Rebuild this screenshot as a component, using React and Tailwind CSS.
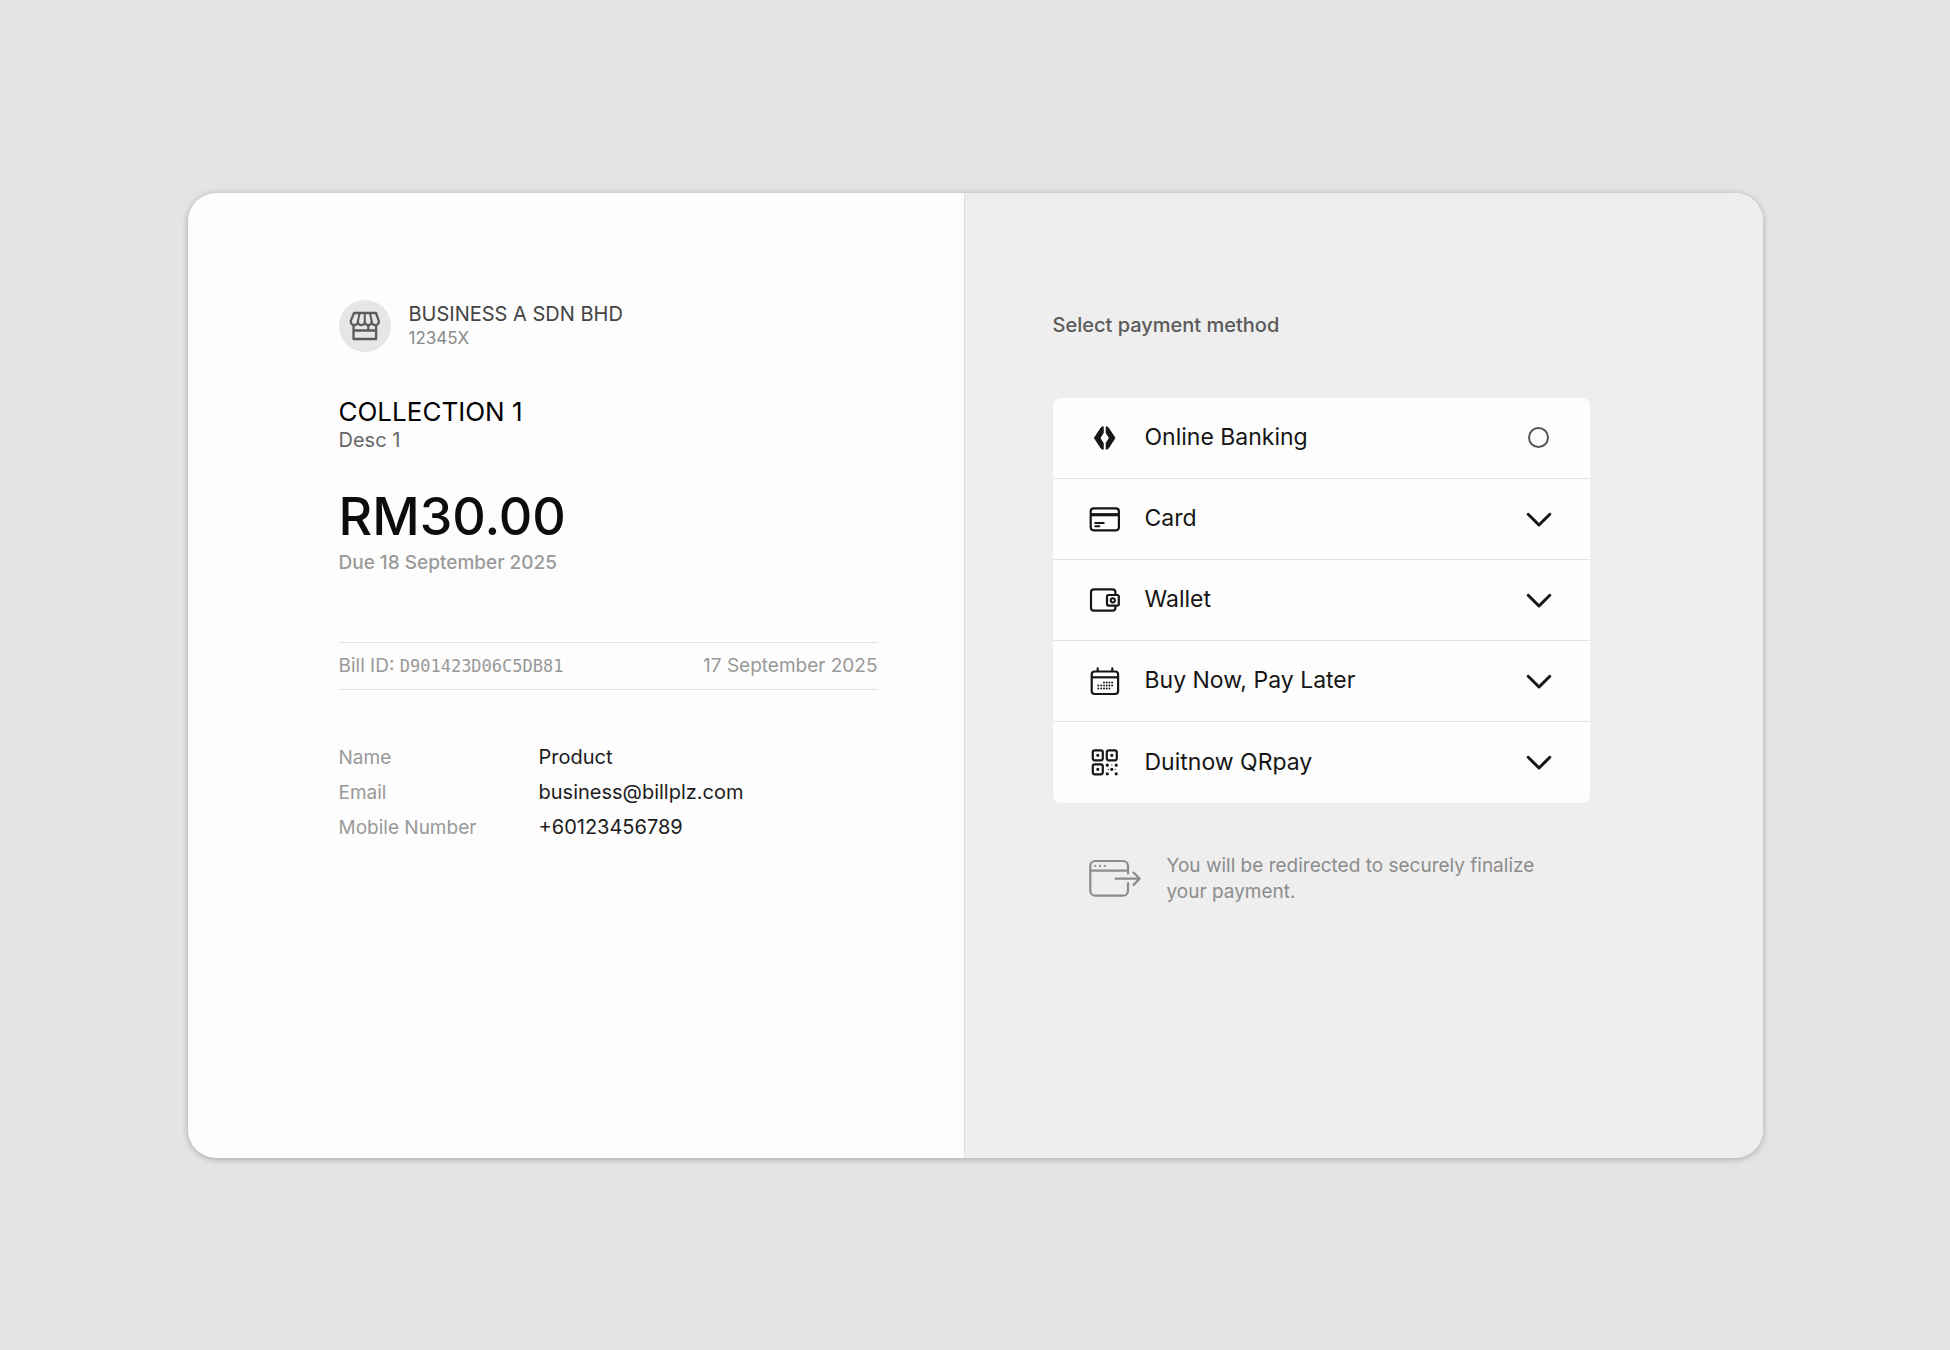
import { useState } from 'react'

function StoreIcon() {
  return (
    <svg className="size-13" viewBox="0 0 52 52" fill="none" stroke="#5c5c5c" strokeWidth="2.3" strokeLinejoin="round" aria-hidden="true">
      <path d="M15 13h22l2.800 7.900v.8a3.550 3.550 0 0 1-7.100 0 3.450 3.450 0 0 1-6.900 0 3.450 3.450 0 0 1-6.900 0 3.550 3.550 0 0 1-7.100 0v-.8z" />
      <path d="M20.600 13l-1.700 8.500M25.800 13v8.500M31 13l1.700 8.500" strokeWidth="2" />
      <path d="M14.500 25v14h22.600V25M14.500 30.500h22.600M29.300 25v5.500" />
    </svg>
  )
}

function BankIcon() {
  return (
    <svg className="size-8" viewBox="0 0 32 32" fill="currentColor" stroke="currentColor" strokeWidth="1" strokeLinejoin="round" aria-hidden="true">
      <path d="M15.200 4.700v6.200L12 16l3.200 5.100v6.200l-2-.9L6.400 16l6.800-10.400z" />
      <path d="M18.200 4.700v6.200l3.200 5.100-3.200 5.100v6.200l2-.9L27 16 20.200 5.600z" />
    </svg>
  )
}

function CardIcon() {
  return (
    <svg className="size-8" viewBox="0 0 32 32" fill="none" stroke="currentColor" strokeWidth="2.2" strokeLinecap="round" aria-hidden="true">
      <rect x="2.7" y="5.3" width="28.2" height="22" rx="3" />
      <path d="M3 11.7h27.500" strokeWidth="3.2" strokeLinecap="butt" />
      <path d="M7.200 20h8.600M7.200 23.200h4.200" strokeWidth="1.9" />
    </svg>
  )
}

function WalletIcon() {
  return (
    <svg className="size-8" viewBox="0 0 32 32" fill="none" stroke="currentColor" strokeWidth="2.2" strokeLinejoin="round" aria-hidden="true">
      <path d="M27.400 10.800V8.300a3 3 0 0 0-3-3H6a3 3 0 0 0-3 3v15.400a3 3 0 0 0 3 3h18.400a3 3 0 0 0 3-3v-2" />
      <rect x="19" y="11" width="11.8" height="10.6" rx="1.5" />
      <circle cx="24.8" cy="16.3" r="2.1" strokeWidth="2" />
    </svg>
  )
}

function CalendarIcon() {
  return (
    <svg className="size-8" viewBox="0 0 32 32" fill="none" stroke="currentColor" strokeWidth="2.2" strokeLinecap="round" aria-hidden="true">
      <rect x="3.7" y="6.5" width="26.4" height="22.5" rx="3" />
      <path d="M4 12.300h26" strokeLinecap="butt" />
      <path d="M9.700 3.400V6M24.300 3.400V6" />
      <path d="M16 17.500h.01M18.700 17.500h.01M21.400 17.500h.01M24.100 17.500h.01M10.300 20.500h.01M13.200 20.500h.01M16 20.500h.01M18.700 20.500h.01M21.400 20.500h.01M24.100 20.500h.01M10.300 23.500h.01M13.200 23.500h.01M16 23.500h.01M18.700 23.500h.01M21.400 23.500h.01" strokeWidth="1.9" />
    </svg>
  )
}

function QrIcon() {
  return (
    <svg className="size-8" viewBox="0 0 32 32" fill="none" stroke="currentColor" strokeWidth="2.2" aria-hidden="true">
      <rect x="4.8" y="4.3" width="10" height="10" rx="2" />
      <rect x="18.8" y="4.3" width="10" height="10" rx="2" />
      <rect x="4.8" y="18.3" width="10" height="10" rx="2" />
      <path d="M9.800 9.300h.01M23.800 9.300h.01M9.800 23.300h.01M19.300 19.200h.01M28.200 19.200h.01M23.800 23.300h.01M19.300 27.800h.01M28.200 27.800h.01" strokeWidth="3.2" strokeLinecap="round" />
      <path d="M23.800 18.800h.01M20.500 23.300h.01M27.200 23.300h.01" strokeWidth="1.2" strokeLinecap="round" />
    </svg>
  )
}

function Chevron({ open }) {
  return (
    <svg className={open ? 'size-8 rotate-180' : 'size-8'} viewBox="0 0 32 32" fill="none" stroke="currentColor" strokeWidth="3" strokeLinecap="round" strokeLinejoin="round" aria-hidden="true">
      <path d="M5.200 11.300L16 22 26.800 11.300" />
    </svg>
  )
}

function RedirectIcon() {
  return (
    <svg className="h-11 w-[54px] shrink-0" viewBox="0 0 54 44" fill="none" stroke="currentColor" strokeWidth="2.2" strokeLinecap="round" strokeLinejoin="round" aria-hidden="true">
      <path d="M40 16.500V9a5 5 0 0 0-5-5H7.300a5 5 0 0 0-5 5v24.700a5 5 0 0 0 5 5H35a5 5 0 0 0 5-5V26" />
      <path d="M2.300 13.700H40M27.500 21.700H51M45.500 15.500l6.200 6.200-6.200 6.200" />
      <path d="M7.200 8.900h.01M12 8.900h.01M16.700 8.900h.01" />
    </svg>
  )
}

const methods = [
  { id: 'card', label: 'Card', Icon: CardIcon },
  { id: 'wallet', label: 'Wallet', Icon: WalletIcon },
  { id: 'bnpl', label: 'Buy Now, Pay Later', Icon: CalendarIcon },
  { id: 'qr', label: 'Duitnow QRpay', Icon: QrIcon },
]

const payer = [
  ['Name', 'Product'],
  ['Email', 'business@billplz.com'],
  ['Mobile Number', '+60123456789'],
]

export default function App() {
  const [open, setOpen] = useState('')

  return (
    <div className="flex min-h-screen items-center justify-center bg-[#e4e4e4] p-6 font-['Inter',sans-serif]">
      <main className="grid min-h-[965px] w-full max-w-[1575px] grid-cols-[777fr_798fr] overflow-hidden rounded-[28px] bg-[#fdfdfd] shadow-[0_1px_6px_rgba(0,0,0,0.28)]">
        <section className="flex justify-end border-r border-[#dedede] pt-[107px] pr-[86px] pl-6">
          <div className="w-full max-w-[539px]">
            <header className="flex gap-[18px]">
              <div className="size-13 shrink-0 rounded-full bg-[#e6e6e6]">
                <StoreIcon />
              </div>
              <div>
                <p className="text-[20px] leading-7 text-[#444444]">BUSINESS A SDN BHD</p>
                <p className="text-[17px] leading-5 text-[#8a8a8a]">12345X</p>
              </div>
            </header>

            <h1 className="mt-[46px] text-[26px] leading-7 text-black">COLLECTION 1</h1>
            <p className="text-[20px] leading-7 text-[#666666]">Desc 1</p>
            <p className="mt-[31px] text-[52px] leading-16 font-medium text-[#0c0c0c]">RM30.00</p>
            <p className="text-[19px] leading-7 font-medium text-[#9a9a9a]">Due 18 September 2025</p>

            <div className="mt-[65px] flex justify-between border-y border-[#e2e2e2] text-[19px] leading-[45px] text-[#999999]">
              <p>Bill ID: <span className="font-['DejaVu_Sans_Mono',monospace] text-[17px]">D901423D06C5DB81</span></p>
              <p>17 September 2025</p>
            </div>

            <dl className="mt-[50px] grid grid-cols-[200px_1fr] text-[19px] leading-[35px]">
              {payer.map(([term, value]) => (
                <div key={term} className="contents">
                  <dt className="text-[#999999]">{term}</dt>
                  <dd className="text-[20px] text-[#1c1c1c]">{value}</dd>
                </div>
              ))}
            </dl>
          </div>
        </section>

        <section className="bg-[#eeeeee] pt-[118px] pr-6 pl-[88px]">
          <div className="w-full max-w-[537px]">
            <h2 className="text-[20px] leading-7 font-medium text-[#5a5a5a]">Select payment method</h2>

            <div className="mt-[59px] divide-y divide-[#e2e2e2] overflow-hidden rounded-lg bg-[#fdfdfd] text-[23px] text-[#161616]">
              <label className="flex h-[81px] cursor-pointer items-center gap-[25px] px-[35px]">
                <BankIcon />
                <span className="flex-1">Online Banking</span>
                <span className="flex w-8 justify-center">
                  <input type="radio" name="method" className="size-[21px] appearance-none rounded-full border-2 border-[#555555] checked:border-[6px]" onChange={() => setOpen('')} />
                </span>
              </label>
              {methods.map(({ id, label, Icon }) => (
                <button key={id} type="button" aria-expanded={open === id} className="flex h-[81px] w-full cursor-pointer items-center gap-[25px] px-[35px] text-left" onClick={() => setOpen(open === id ? '' : id)}>
                  <Icon />
                  <span className="flex-1">{label}</span>
                  <Chevron open={open === id} />
                </button>
              ))}
            </div>

            <div className="mt-[50px] flex items-center gap-[25px] px-[35px] text-[#8c8c8c]">
              <RedirectIcon />
              <p className="text-[19px] leading-[26px]">You will be redirected to securely finalize your payment.</p>
            </div>
          </div>
        </section>
      </main>
    </div>
  )
}
